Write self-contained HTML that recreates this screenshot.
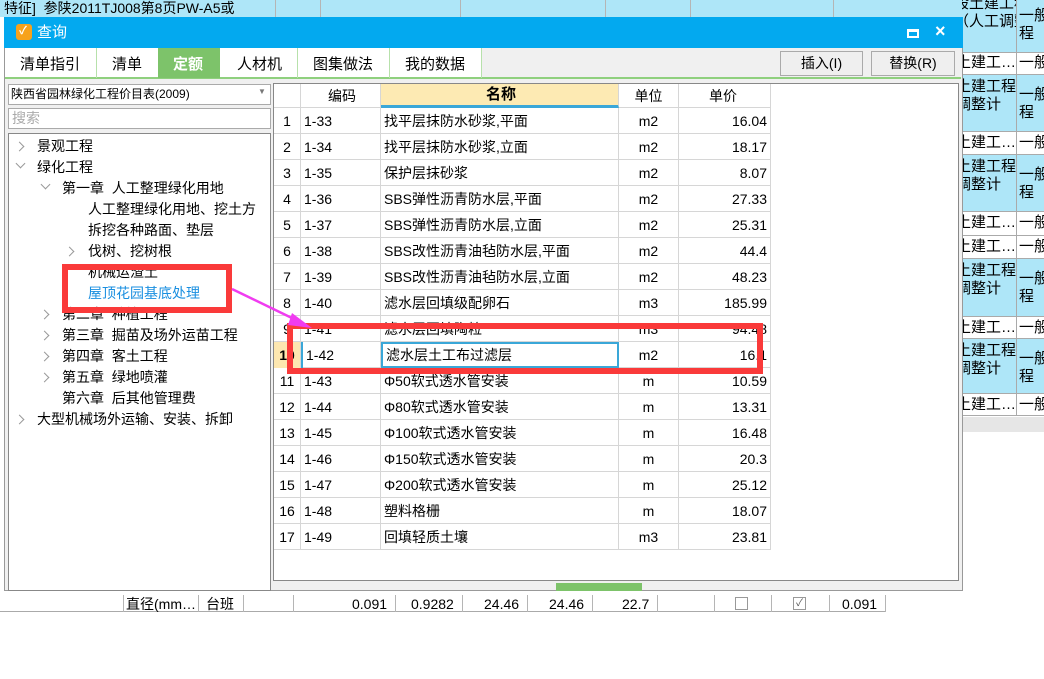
<!DOCTYPE html>
<html><head><meta charset="utf-8"><style>
*{margin:0;padding:0;box-sizing:border-box}
body{width:1044px;height:679px;overflow:hidden;background:#fff;position:relative;font-family:"Liberation Sans","Noto Sans CJK SC",sans-serif;font-size:14px;color:#000}
.a{position:absolute}
.t{position:absolute;white-space:nowrap;line-height:1}
.vl{position:absolute;width:1px;background:#b5b5b5}
.row{position:absolute;left:274px;width:497px;height:26px;border-bottom:1px solid #d6d6d6}
.row div{position:absolute;top:0;height:26px;line-height:26px;white-space:nowrap;border-right:1px solid #d6d6d6}
.c1{left:0;width:27px;text-align:center}
.c2{left:27px;width:80px;padding-left:3px}
.c3{left:107px;width:238px;padding-left:3px}
.c4{left:345px;width:60px;text-align:center}
.c5{left:405px;width:92px;text-align:right;padding-right:3px}
.tree{position:absolute;white-space:nowrap;font-size:14px;line-height:21px}
.chev{position:absolute;width:7px;height:7px;border-right:1.5px solid #999;border-bottom:1.5px solid #999}
.clip{position:absolute;overflow:hidden}
.clip div{position:absolute;white-space:nowrap;font-size:15px;line-height:18px}
</style></head><body>
<!-- background top row -->
<div class="a" style="left:0;top:0;width:1044px;height:17px;background:#aee6f8"></div>
<div class="t" style="left:4px;top:1px;font-size:14px">特征]&nbsp; 参陕2011TJ008第8页PW-A5或</div>
<div class="vl" style="left:275px;top:0;height:17px"></div><div class="vl" style="left:320px;top:0;height:17px"></div>
<div class="vl" style="left:460px;top:0;height:17px"></div><div class="vl" style="left:605px;top:0;height:17px"></div>
<div class="vl" style="left:690px;top:0;height:17px"></div><div class="vl" style="left:833px;top:0;height:17px"></div>
<!-- right side background table -->
<div class="a" style="left:962px;top:0;width:82px;height:52px;background:#aee6f8"></div>
<div class="a" style="left:962px;top:52px;width:82px;height:22px;background:#fff;border-top:1px solid #aaa"></div>
<div class="a" style="left:962px;top:74px;width:82px;height:57px;background:#aee6f8;border-top:1px solid #aaa"></div>
<div class="a" style="left:962px;top:131px;width:82px;height:23px;background:#fff;border-top:1px solid #aaa"></div>
<div class="a" style="left:962px;top:154px;width:82px;height:57px;background:#aee6f8;border-top:1px solid #aaa"></div>
<div class="a" style="left:962px;top:211px;width:82px;height:24px;background:#fff;border-top:1px solid #aaa"></div>
<div class="a" style="left:962px;top:235px;width:82px;height:23px;background:#fff;border-top:1px solid #aaa"></div>
<div class="a" style="left:962px;top:258px;width:82px;height:58px;background:#aee6f8;border-top:1px solid #aaa"></div>
<div class="a" style="left:962px;top:316px;width:82px;height:22px;background:#fff;border-top:1px solid #aaa"></div>
<div class="a" style="left:962px;top:338px;width:82px;height:55px;background:#aee6f8;border-top:1px solid #aaa"></div>
<div class="a" style="left:962px;top:393px;width:82px;height:23px;background:#fff;border-top:1px solid #aaa;border-bottom:1px solid #aaa"></div>
<div class="a" style="left:962px;top:417px;width:82px;height:15px;background:#e6e6e6"></div>
<div class="vl" style="left:1016px;top:0;height:416px;background:#aaa"></div>
<div class="clip" style="left:962px;top:0;width:54px;height:416px">
<div style="left:-8px;top:-5px">般土建工程<br>（人工调整计<br>)</div>
<div style="left:-6px;top:54px">土建工…</div>
<div style="left:-6px;top:78px">土建工程<br>调整计<br>)</div>
<div style="left:-6px;top:134px">土建工…</div>
<div style="left:-6px;top:158px">土建工程<br>调整计<br>)</div>
<div style="left:-6px;top:214px">土建工…</div>
<div style="left:-6px;top:238px">土建工…</div>
<div style="left:-6px;top:262px">土建工程<br>调整计<br>)</div>
<div style="left:-6px;top:319px">土建工…</div>
<div style="left:-6px;top:342px">土建工程<br>调整计<br>)</div>
<div style="left:-6px;top:396px">土建工…</div>
</div>
<div class="clip" style="left:1017px;top:0;width:27px;height:416px">
<div style="left:2px;top:7px">一般<br>程</div>
<div style="left:2px;top:54px">一般</div>
<div style="left:2px;top:86px">一般<br>程</div>
<div style="left:2px;top:134px">一般</div>
<div style="left:2px;top:166px">一般<br>程</div>
<div style="left:2px;top:214px">一般</div>
<div style="left:2px;top:238px">一般</div>
<div style="left:2px;top:270px">一般<br>程</div>
<div style="left:2px;top:319px">一般</div>
<div style="left:2px;top:350px">一般<br>程</div>
<div style="left:2px;top:396px">一般</div>
</div>
<!-- bottom background row -->
<div class="a" style="left:0;top:595px;width:885px;height:17px;border-bottom:1px solid #aaa"></div>
<div class="vl" style="left:123px;top:595px;height:17px"></div><div class="vl" style="left:198px;top:595px;height:17px"></div>
<div class="vl" style="left:243px;top:595px;height:17px"></div><div class="vl" style="left:293px;top:595px;height:17px"></div>
<div class="vl" style="left:395px;top:595px;height:17px"></div><div class="vl" style="left:462px;top:595px;height:17px"></div>
<div class="vl" style="left:527px;top:595px;height:17px"></div><div class="vl" style="left:592px;top:595px;height:17px"></div>
<div class="vl" style="left:657px;top:595px;height:17px"></div><div class="vl" style="left:714px;top:595px;height:17px"></div>
<div class="vl" style="left:771px;top:595px;height:17px"></div><div class="vl" style="left:829px;top:595px;height:17px"></div>
<div class="vl" style="left:885px;top:595px;height:17px"></div>
<div class="t" style="left:126px;top:597px">直径(mm…</div><div class="t" style="left:206px;top:597px">台班</div>
<div class="t" style="left:352px;top:597px">0.091</div><div class="t" style="left:411px;top:597px">0.9282</div>
<div class="t" style="left:484px;top:597px">24.46</div><div class="t" style="left:549px;top:597px">24.46</div>
<div class="t" style="left:622px;top:597px">22.7</div>
<div class="a" style="left:735px;top:597px;width:13px;height:13px;border:1px solid #999;background:#fff"></div>
<div class="a" style="left:793px;top:597px;width:13px;height:13px;border:1px solid #999;background:#fff;font-size:10px;line-height:11px;text-align:center;color:#555">✓</div>
<div class="t" style="left:842px;top:597px">0.091</div>
<!-- dialog -->
<div class="a" style="left:4px;top:17px;width:959px;height:574px;background:#f0f0f0;border:1px solid #999"></div>
<div class="a" style="left:4px;top:17px;width:959px;height:31px;background:#03a9ef"></div>
<div class="a" style="left:16px;top:24px;width:16px;height:16px;background:#f7a21b;border-radius:3px"></div>
<div class="t" style="left:19px;top:26px;color:#fff;font-size:11px;font-weight:bold">✓</div>
<div class="t" style="left:37px;top:25px;color:#fff;font-size:15px">查询</div>
<div class="a" style="left:907px;top:29px;width:12px;height:9px;border:2px solid #fff;border-top-width:3px"></div>
<div class="t" style="left:935px;top:22px;color:#fff;font-size:18px;font-weight:bold">×</div>
<!-- tabs -->
<div class="a" style="left:5px;top:48px;width:476px;height:30px;background:#fff"></div>
<div class="a" style="left:5px;top:77px;width:956px;height:2px;background:#8fd07e"></div>
<div class="a" style="left:158px;top:48px;width:62px;height:30px;background:#7dc36a"></div>
<div class="vl" style="left:96px;top:48px;height:30px;background:#b7e1ab"></div>
<div class="vl" style="left:297px;top:48px;height:30px;background:#b7e1ab"></div>
<div class="vl" style="left:389px;top:48px;height:30px;background:#b7e1ab"></div>
<div class="vl" style="left:481px;top:48px;height:30px;background:#b7e1ab"></div>
<div class="t" style="left:20px;top:57px;font-size:15px">清单指引</div>
<div class="t" style="left:112px;top:57px;font-size:15px">清单</div>
<div class="t" style="left:173px;top:57px;font-size:15px;color:#fff;font-weight:bold">定额</div>
<div class="t" style="left:237px;top:57px;font-size:15px">人材机</div>
<div class="t" style="left:313px;top:57px;font-size:15px">图集做法</div>
<div class="t" style="left:405px;top:57px;font-size:15px">我的数据</div>
<div class="a" style="left:780px;top:51px;width:83px;height:25px;border:1px solid #aaa;background:#efefef;text-align:center;line-height:23px">插入(I)</div>
<div class="a" style="left:871px;top:51px;width:84px;height:25px;border:1px solid #aaa;background:#efefef;text-align:center;line-height:23px">替换(R)</div>
<!-- left panel -->
<div class="a" style="left:8px;top:84px;width:263px;height:21px;background:#fff;border:1px solid #aaa"></div>
<div class="t" style="left:11px;top:88px;font-size:12px">陕西省园林绿化工程价目表(2009)</div>
<div class="t" style="left:258px;top:88px;font-size:8px;color:#777">▼</div>
<div class="a" style="left:8px;top:108px;width:263px;height:21px;background:#fff;border:1px solid #aaa"></div>
<div class="t" style="left:12px;top:111px;font-size:14px;color:#aaa">搜索</div>
<div class="a" style="left:8px;top:133px;width:263px;height:458px;background:#fff;border:1px solid #888"></div>
<div class="chev" style="left:16px;top:143px;transform:rotate(-45deg)"></div>
<div class="tree" style="left:37px;top:136px">景观工程</div>
<div class="chev" style="left:17px;top:160px;transform:rotate(45deg)"></div>
<div class="tree" style="left:37px;top:157px">绿化工程</div>
<div class="chev" style="left:42px;top:181px;transform:rotate(45deg)"></div>
<div class="tree" style="left:62px;top:178px">第一章&nbsp; 人工整理绿化用地</div>
<div class="tree" style="left:88px;top:199px">人工整理绿化用地、挖土方</div>
<div class="tree" style="left:88px;top:220px">拆挖各种路面、垫层</div>
<div class="chev" style="left:66px;top:248px;transform:rotate(-45deg)"></div>
<div class="tree" style="left:88px;top:241px">伐树、挖树根</div>
<div class="tree" style="left:88px;top:262px">机械运渣土</div>
<div class="tree" style="left:88px;top:283px;color:#1a8fe0">屋顶花园基底处理</div>
<div class="chev" style="left:41px;top:311px;transform:rotate(-45deg)"></div>
<div class="tree" style="left:62px;top:304px">第二章&nbsp; 种植工程</div>
<div class="chev" style="left:41px;top:332px;transform:rotate(-45deg)"></div>
<div class="tree" style="left:62px;top:325px">第三章&nbsp; 掘苗及场外运苗工程</div>
<div class="chev" style="left:41px;top:353px;transform:rotate(-45deg)"></div>
<div class="tree" style="left:62px;top:346px">第四章&nbsp; 客土工程</div>
<div class="chev" style="left:41px;top:374px;transform:rotate(-45deg)"></div>
<div class="tree" style="left:62px;top:367px">第五章&nbsp; 绿地喷灌</div>
<div class="tree" style="left:62px;top:388px">第六章&nbsp; 后其他管理费</div>
<div class="chev" style="left:16px;top:416px;transform:rotate(-45deg)"></div>
<div class="tree" style="left:37px;top:409px">大型机械场外运输、安装、拆卸</div>
<!-- grid -->
<div class="a" style="left:273px;top:83px;width:686px;height:498px;background:#fff;border:1px solid #888"></div>
<div class="row" style="top:84px;height:24px">
<div class="c1" style="height:24px"></div><div class="c2" style="height:24px;text-align:center;line-height:24px">编码</div>
<div class="c3" style="height:24px;background:#fdeab3;border-bottom:3px solid #3aa7d8;text-align:center;line-height:22px;font-weight:bold;font-size:15px">名称</div>
<div class="c4" style="height:24px;line-height:24px">单位</div><div class="c5" style="height:24px;text-align:center;line-height:24px">单价</div></div>
<div class="row" style="top:108px"><div class="c1">1</div><div class="c2">1-33</div><div class="c3">找平层抹防水砂浆,平面</div><div class="c4">m2</div><div class="c5">16.04</div></div>
<div class="row" style="top:134px"><div class="c1">2</div><div class="c2">1-34</div><div class="c3">找平层抹防水砂浆,立面</div><div class="c4">m2</div><div class="c5">18.17</div></div>
<div class="row" style="top:160px"><div class="c1">3</div><div class="c2">1-35</div><div class="c3">保护层抹砂浆</div><div class="c4">m2</div><div class="c5">8.07</div></div>
<div class="row" style="top:186px"><div class="c1">4</div><div class="c2">1-36</div><div class="c3">SBS弹性沥青防水层,平面</div><div class="c4">m2</div><div class="c5">27.33</div></div>
<div class="row" style="top:212px"><div class="c1">5</div><div class="c2">1-37</div><div class="c3">SBS弹性沥青防水层,立面</div><div class="c4">m2</div><div class="c5">25.31</div></div>
<div class="row" style="top:238px"><div class="c1">6</div><div class="c2">1-38</div><div class="c3">SBS改性沥青油毡防水层,平面</div><div class="c4">m2</div><div class="c5">44.4</div></div>
<div class="row" style="top:264px"><div class="c1">7</div><div class="c2">1-39</div><div class="c3">SBS改性沥青油毡防水层,立面</div><div class="c4">m2</div><div class="c5">48.23</div></div>
<div class="row" style="top:290px"><div class="c1">8</div><div class="c2">1-40</div><div class="c3">滤水层回填级配卵石</div><div class="c4">m3</div><div class="c5">185.99</div></div>
<div class="row" style="top:316px"><div class="c1">9</div><div class="c2">1-41</div><div class="c3">滤水层回填陶粒</div><div class="c4">m3</div><div class="c5">94.48</div></div>
<div class="row" style="top:342px"><div class="c1" style="background:#fde7b0;font-weight:bold">10</div><div class="c2" style="border-left:2px solid #3aa7d8">1-42</div><div class="c3" style="border:2px solid #3aa7d8;line-height:22px">滤水层土工布过滤层</div><div class="c4">m2</div><div class="c5">16.1</div></div>
<div class="row" style="top:368px"><div class="c1">11</div><div class="c2">1-43</div><div class="c3">Φ50软式透水管安装</div><div class="c4">m</div><div class="c5">10.59</div></div>
<div class="row" style="top:394px"><div class="c1">12</div><div class="c2">1-44</div><div class="c3">Φ80软式透水管安装</div><div class="c4">m</div><div class="c5">13.31</div></div>
<div class="row" style="top:420px"><div class="c1">13</div><div class="c2">1-45</div><div class="c3">Φ100软式透水管安装</div><div class="c4">m</div><div class="c5">16.48</div></div>
<div class="row" style="top:446px"><div class="c1">14</div><div class="c2">1-46</div><div class="c3">Φ150软式透水管安装</div><div class="c4">m</div><div class="c5">20.3</div></div>
<div class="row" style="top:472px"><div class="c1">15</div><div class="c2">1-47</div><div class="c3">Φ200软式透水管安装</div><div class="c4">m</div><div class="c5">25.12</div></div>
<div class="row" style="top:498px"><div class="c1">16</div><div class="c2">1-48</div><div class="c3">塑料格栅</div><div class="c4">m</div><div class="c5">18.07</div></div>
<div class="row" style="top:524px"><div class="c1">17</div><div class="c2">1-49</div><div class="c3">回填轻质土壤</div><div class="c4">m3</div><div class="c5">23.81</div></div>
<div class="a" style="left:556px;top:583px;width:86px;height:8px;background:#7dc36a"></div>
<!-- annotations -->
<div class="a" style="left:62px;top:264px;width:170px;height:49px;border:6px solid #fa3a3a"></div>
<div class="a" style="left:287px;top:323px;width:476px;height:51px;border:6px solid #fa3a3a"></div>
<svg class="a" style="left:0;top:0" width="1044" height="679"><line x1="232" y1="289" x2="296" y2="320" stroke="#f03cf0" stroke-width="2.5"/><polygon points="312,328 292,313 288,325" fill="#f03cf0"/></svg>
</body></html>
